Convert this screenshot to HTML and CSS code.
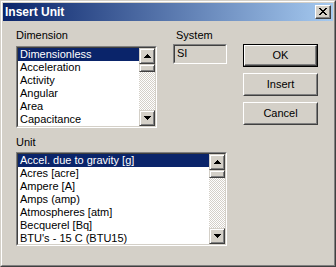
FILE: index.html
```html
<!DOCTYPE html>
<html>
<head>
<meta charset="utf-8">
<link rel="stylesheet" href="styles.css">
</head>
<body>
<div class="window">
  <div class="frame">
    <div class="titlebar">
      <span class="title">Insert Unit</span>
      <div class="close"><svg width="8" height="7" viewBox="0 0 8 7"><path d="M0 0h2v1h1v1h2v-1h1v-1h2v1h-1v1h-1v1h-1v1h1v1h1v1h1v1h-2v-1h-1v-1h-2v1h-1v1h-2v-1h1v-1h1v-1h1v-1h-1v-1h-1v-1h-1z" fill="#000"/></svg></div>
    </div>
    <div class="client">
      <div class="layout">
        <div class="group dim">
          <div class="label">Dimension</div>
          <div class="listbox dim-list">
            <div class="listbox-inner">
              <ul class="items">
                <li class="sel">Dimensionless</li>
                <li>Acceleration</li>
                <li>Activity</li>
                <li>Angular</li>
                <li>Area</li>
                <li>Capacitance</li>
              </ul>
              <div class="scrollbar">
                <div class="sb-btn"><svg width="7" height="4" viewBox="0 0 7 4"><path d="M3 0h1v1h1v1h1v1h1v1h-7v-1h1v-1h1v-1h1z" fill="#000"/></svg></div>
                <div class="sb-thumb"></div>
                <div class="sb-track"></div>
                <div class="sb-btn"><svg width="7" height="4" viewBox="0 0 7 4"><path d="M0 0h7v1h-1v1h-1v1h-1v1h-1v-1h-1v-1h-1v-1h-1z" fill="#000"/></svg></div>
              </div>
            </div>
          </div>
        </div>
        <div class="group sys">
          <div class="label sys-label">System</div>
          <div class="field"><div class="field-inner">SI</div></div>
        </div>
        <div class="buttons">
          <div class="btn default"><div class="btn-face">OK</div></div>
          <div class="btn"><div class="btn-face">Insert</div></div>
          <div class="btn"><div class="btn-face">Cancel</div></div>
        </div>
        <div class="group unit">
          <div class="label">Unit</div>
          <div class="listbox unit-list">
            <div class="listbox-inner">
              <ul class="items">
                <li class="sel">Accel. due to gravity [g]</li>
                <li>Acres [acre]</li>
                <li>Ampere [A]</li>
                <li>Amps (amp)</li>
                <li>Atmospheres [atm]</li>
                <li>Becquerel [Bq]</li>
                <li>BTU's - 15 C (BTU15)</li>
              </ul>
              <div class="scrollbar">
                <div class="sb-btn"><svg width="7" height="4" viewBox="0 0 7 4"><path d="M3 0h1v1h1v1h1v1h1v1h-7v-1h1v-1h1v-1h1z" fill="#000"/></svg></div>
                <div class="sb-thumb"></div>
                <div class="sb-track"></div>
                <div class="sb-btn"><svg width="7" height="4" viewBox="0 0 7 4"><path d="M0 0h7v1h-1v1h-1v1h-1v1h-1v-1h-1v-1h-1v-1h-1z" fill="#000"/></svg></div>
              </div>
            </div>
          </div>
        </div>
      </div>
    </div>
  </div>
</div>
</body>
</html>
```

FILE: styles.css
```css
html, body {
  margin: 0;
  padding: 0;
  background: #d4d0c8;
}
body {
  font-family: "Liberation Sans", Arial, sans-serif;
  font-size: 11px;
  line-height: 13px;
  color: #000;
}
.window {
  width: 336px;
  height: 267px;
  box-sizing: border-box;
  background: #d4d0c8;
  border: 1px solid;
  border-color: #d4d0c8 #404040 #404040 #d4d0c8;
}
.frame {
  height: 100%;
  box-sizing: border-box;
  border: 1px solid;
  border-color: #fff #808080 #808080 #fff;
  padding: 1px;
}
.titlebar {
  height: 18px;
  display: flex;
  align-items: center;
  justify-content: space-between;
  padding: 0 2px;
  background: linear-gradient(to right, #0a246a, #a6caf0);
}
.title {
  color: #fff;
  font-weight: bold;
  font-size: 12px;
}
.close {
  width: 16px;
  height: 14px;
  box-sizing: border-box;
  background: #d4d0c8;
  border: 1px solid;
  border-color: #fff #404040 #404040 #fff;
  box-shadow: inset -1px -1px #808080;
  display: flex;
  align-items: center;
  justify-content: center;
  padding: 0 1px 1px 0;
}
.close svg { display: block; }
.client {
  padding: 8px 0 0 13px;
}
.layout {
  display: grid;
  grid-template-columns: 141px 54px 75px;
  column-gap: 16px;
  align-items: start;
}
.label {
  height: 13px;
  padding-left: 0;
}
.sys-label { padding-left: 3px; }
.dim-list { margin-top: 4px; }
.unit { grid-column: 1 / 3; margin-top: 8px; }
.unit .listbox { margin-top: 3px; }
.listbox {
  border: 1px solid;
  border-color: #808080 #fff #fff #808080;
  background: #fff;
}
.listbox-inner {
  border: 1px solid;
  border-color: #404040 #d4d0c8 #d4d0c8 #404040;
  display: flex;
}
.dim-list .listbox-inner { height: 78px; }
.unit-list .listbox-inner { height: 90px; }
.items {
  list-style: none;
  margin: 0;
  padding: 0;
  flex: 1;
  overflow: hidden;
  white-space: nowrap;
}
.items li {
  height: 13px;
  padding-left: 2px;
}
.items li.sel {
  background: #0a246a;
  color: #fff;
}
.scrollbar {
  width: 16px;
  display: flex;
  flex-direction: column;
}
.sb-btn, .sb-thumb {
  box-sizing: border-box;
  background: #d4d0c8;
  border: 1px solid;
  border-color: #d4d0c8 #404040 #404040 #d4d0c8;
  box-shadow: inset 1px 1px #fff, inset -1px -1px #808080;
}
.sb-btn {
  height: 16px;
  flex: none;
  display: flex;
  align-items: center;
  justify-content: center;
}
.sb-btn svg { display: block; }
.sb-thumb {
  height: 8px;
  flex: none;
}
.sb-track {
  flex: 1;
  background: repeating-conic-gradient(#d4d0c8 0 25%, #fff 0 50%) 0 0 / 2px 2px;
}
.sys .field {
  margin-top: 2px;
  border: 1px solid;
  border-color: #808080 #fff #fff #808080;
}
.field-inner {
  height: 16px;
  border: 1px solid;
  border-color: #404040 #d4d0c8 #d4d0c8 #404040;
  padding-left: 2px;
  line-height: 15px;
}
.buttons {
  padding-top: 15px;
  display: flex;
  flex-direction: column;
  gap: 6px;
}
.btn {
  height: 23px;
  box-sizing: border-box;
  border: 1px solid;
  border-color: #fff #404040 #404040 #fff;
  display: flex;
}
.btn-face {
  flex: 1;
  border: 1px solid;
  border-color: #d4d0c8 #808080 #808080 #d4d0c8;
  display: flex;
  align-items: center;
  justify-content: center;
}
.btn.default {
  border-color: #000;
}
.btn.default .btn-face {
  border-color: #fff #404040 #404040 #fff;
  box-shadow: inset -1px -1px #808080;
}
```
